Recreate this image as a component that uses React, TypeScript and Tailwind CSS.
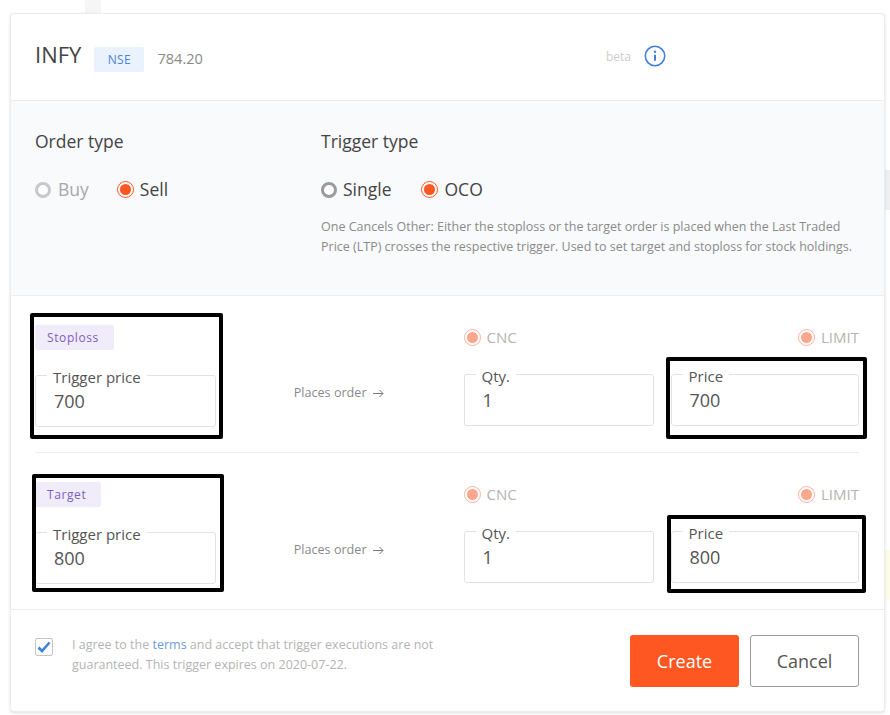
import React from "react";

function Radio({ label, active = false, faded = false, muted = false, size = "text-[17.5px]", gap = "gap-[7px]" }: { label: string; active?: boolean; faded?: boolean; muted?: boolean; size?: string; gap?: string }) {
  return (
    <div className={`flex items-center ${gap}`}>
      {active ? (
        <span className={`flex h-[17px] w-[17px] items-center justify-center rounded-full border ${faded ? "border-[#ffb39b]" : "border-[#ff5722]"}`}>
          <span className={`h-[11px] w-[11px] rounded-full ${faded ? "bg-[#ffa68b]" : "bg-[#ff5722]"}`} />
        </span>
      ) : (
        <span className={`h-[16px] w-[16px] rounded-full border-[3px] bg-white ${muted ? "border-[#c8c8c8]" : "border-[#9b9b9b]"}`} />
      )}
      <span className={`${size} leading-none ${faded ? "text-[#b4b4b4]" : muted ? "text-[#a8a8a8]" : "text-[#444444]"}`}>{label}</span>
    </div>
  );
}

function Field({ label, value, className = "" }: { label: string; value: string; className?: string }) {
  return (
    <div className={`relative h-[52px] rounded-[3px] border border-[#e2e2e2] bg-white ${className}`}>
      <span className="absolute left-[11px] top-[-8px] bg-white px-[6px] text-[15px] leading-[18px] text-[#555555]">{label}</span>
      <span className="absolute left-[18px] top-[13px] text-[18px] leading-[24px] text-[#555555]">{value}</span>
    </div>
  );
}

function OrderRow({ tag, tagWidth, trigger, price, last = false }: { tag: string; tagWidth: string; trigger: string; price: string; last?: boolean }) {
  return (
    <div className={`ml-[24px] mr-[25px] flex shrink-0 ${last ? "h-[156px]" : "h-[157px] border-b border-[#eeeeee]"}`}>
      <div className="flex w-[181px] flex-col pt-[29px]">
        <span className={`flex h-[25px] items-center rounded-[2px] bg-[#f0ecf9] pl-[12px] text-[12px] tracking-[0.6px] text-[#7e5fc2] ${tagWidth}`}>{tag}</span>
        <Field label="Trigger price" value={trigger} className="mt-[25px]" />
      </div>
      <div className="flex w-[248px] items-center gap-[6px] pl-[78px] pt-[38px] text-[12.6px] text-[#8a8a8a]">
        <span>Places order</span>
        <svg width="11" height="9" viewBox="0 0 11 9" fill="none" stroke="#777777" strokeWidth="1"><path d="M0 4.5h10M6.5 1l3.5 3.5L6.5 8" /></svg>
      </div>
      <div className="flex w-[396px] flex-col pt-[33px]">
        <div className="flex justify-between">
          <Radio label="CNC" active faded size="text-[15px]" gap="gap-[6px]" />
          <Radio label="LIMIT" active faded size="text-[15px]" gap="gap-[6px]" />
        </div>
        <div className="mt-[28px] flex gap-[17px]">
          <Field label="Qty." value="1" className="w-[190px]" />
          <Field label="Price" value={price} className="w-[188px]" />
        </div>
      </div>
    </div>
  );
}

export default function App() {
  return (
    <div className="relative h-[715px] w-[890px] overflow-hidden bg-white font-['Open_Sans',sans-serif]">
      {/* faint page behind the dialog */}
      <div className="absolute left-[85px] top-0 h-[13px] w-[16px] bg-[#f6f6f6]" />
      <div className="absolute left-[885px] top-[170px] h-[40px] w-[5px] bg-[#f0f0f0]" />
      <div className="absolute left-[885px] top-[550px] h-[50px] w-[5px] bg-[#fdfbe9]" />

      <div className="absolute left-[10px] top-[13px] flex h-[699px] w-[875px] flex-col overflow-hidden rounded-[4px] border border-[#ececec] bg-white shadow-[0_1px_3px_rgba(0,0,0,0.12)]">
        <header className="flex h-[86px] shrink-0 items-center pl-[24px]">
          <span className="mb-[6px] text-[22px] leading-none text-[#444444]">INFY</span>
          <span className="ml-[13px] mt-[5px] flex h-[25px] w-[50px] items-center justify-center rounded-[2px] bg-[#e9f2fd] text-[12px] tracking-[0.3px] text-[#4b84d8]">NSE</span>
          <span className="ml-[13px] mt-[3px] text-[14.6px] text-[#8a8a8a]">784.20</span>
          <span className="ml-[403px] text-[12px] text-[#cccccc]">beta</span>
          <svg className="mb-[3px] ml-[13px]" width="22" height="22" viewBox="0 0 22 22" fill="none">
            <circle cx="11" cy="11" r="9.7" stroke="#3f7fe0" strokeWidth="1.6" />
            <circle cx="11" cy="6.8" r="1.2" fill="#3f7fe0" />
            <path d="M11 9.8v6" stroke="#3f7fe0" strokeWidth="2" />
          </svg>
        </header>

        <section className="flex h-[196px] shrink-0 border-y border-[#eeeeee] bg-[#f9fafc] pl-[24px]">
          <div className="w-[286px] pt-[28px]">
            <h3 className="text-[17.5px] leading-[24px] text-[#444444]">Order type</h3>
            <div className="mt-[28px] flex gap-[28px]">
              <Radio label="Buy" muted />
              <Radio label="Sell" active gap="gap-[6px]" />
            </div>
          </div>
          <div className="pt-[28px]">
            <h3 className="text-[17.5px] leading-[24px] text-[#444444]">Trigger type</h3>
            <div className="mt-[28px] flex gap-[29px]">
              <Radio label="Single" gap="gap-[6px]" />
              <Radio label="OCO" active />
            </div>
            <p className="mt-[18px] w-[540px] text-[12.5px] leading-[20px] text-[#8a8a8a]">
              One Cancels Other: Either the stoploss or the target order is placed when the Last Traded Price (LTP) crosses the respective trigger. Used to set target and stoploss for stock holdings.
            </p>
          </div>
        </section>

        <OrderRow tag="Stoploss" tagWidth="w-[79px]" trigger="700" price="700" />
        <OrderRow tag="Target" tagWidth="w-[66px]" trigger="800" price="800" last />

        <footer className="flex flex-1 border-t border-[#eeeeee] pl-[24px] pr-[25px]">
          <span className="mt-[28px] flex h-[18px] w-[18px] items-center justify-center rounded-[2px] border border-[#c4c4c4]">
            <svg width="14" height="12" viewBox="0 0 14 12" fill="none"><path d="M1.5 6.5l3.5 3.5L12.5 1.5" stroke="#3f7fe0" strokeWidth="2.6" /></svg>
          </span>
          <p className="ml-[19px] mt-[25px] w-[380px] text-[12.5px] leading-[20px] text-[#b4b4b4]">
            I agree to the <span className="text-[#6a9be0]">terms</span> and accept that trigger executions are not guaranteed. This trigger expires on 2020-07-22.
          </p>
          <div className="ml-auto mt-[25px] flex h-[52px] gap-[11px]">
            <button className="h-[52px] w-[109px] rounded-[3px] bg-[#ff5722] text-[18px] text-white">Create</button>
            <button className="h-[52px] w-[109px] rounded-[3px] border border-[#9a9a9a] bg-white text-[18px] text-[#555555]">Cancel</button>
          </div>
        </footer>
      </div>

      {/* black annotation rectangles */}
      <div className="absolute left-[30px] top-[313px] h-[126px] w-[193px] rounded-[2px] border-[4px] border-black" />
      <div className="absolute left-[32px] top-[474px] h-[118px] w-[192px] rounded-[2px] border-[4px] border-black" />
      <div className="absolute left-[666px] top-[357px] h-[82px] w-[201px] rounded-[2px] border-[4px] border-black" />
      <div className="absolute left-[667px] top-[515px] h-[78px] w-[199px] rounded-[2px] border-[4px] border-black" />
    </div>
  );
}
